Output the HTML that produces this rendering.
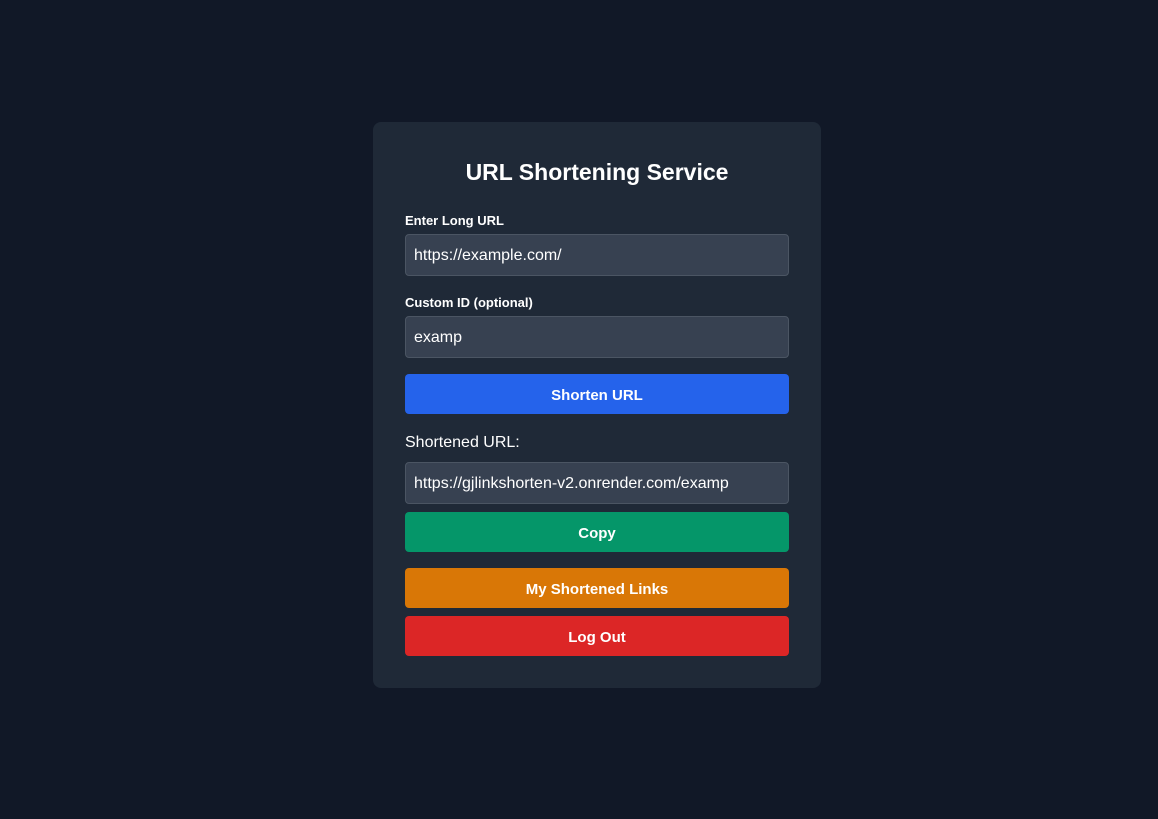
<!DOCTYPE html>
<html><head><style>
body{margin:0;background:#111827;width:1158px;height:819px;font-family:"Liberation Sans",sans-serif;color:#fff;}
.card{position:absolute;left:373px;top:122px;width:448px;height:566px;background:#1f2937;border-radius:8px;}
h1{position:absolute;left:0;width:448px;top:37px;margin:0;text-align:center;font-size:23px;font-weight:bold;}
.lbl{position:absolute;left:32px;font-size:13px;font-weight:bold;}
.inp{position:absolute;left:32px;width:384px;height:42px;background:#374151;border:1px solid #4b5563;border-radius:4px;box-sizing:border-box;padding-left:8px;line-height:41px;font-size:16px;}
.btn{position:absolute;left:32px;width:384px;height:40px;border-radius:4px;text-align:center;line-height:43px;font-weight:bold;font-size:15px;}
</style></head><body>
<div class="card">
<h1>URL Shortening Service</h1>
<div class="lbl" style="top:91px">Enter Long URL</div>
<div class="inp" style="top:112px">https://example.com/</div>
<div class="lbl" style="top:173px">Custom ID (optional)</div>
<div class="inp" style="top:194px">examp</div>
<div class="btn" style="top:252px;background:#2563eb">Shorten URL</div>
<div style="position:absolute;left:32px;top:312px;font-size:16px">Shortened URL:</div>
<div class="inp" style="top:340px">https://gjlinkshorten-v2.onrender.com/examp</div>
<div class="btn" style="top:390px;background:#059669">Copy</div>
<div class="btn" style="top:446px;background:#d97706">My Shortened Links</div>
<div class="btn" style="top:494px;background:#dc2626">Log Out</div>
</div>
</body></html>
